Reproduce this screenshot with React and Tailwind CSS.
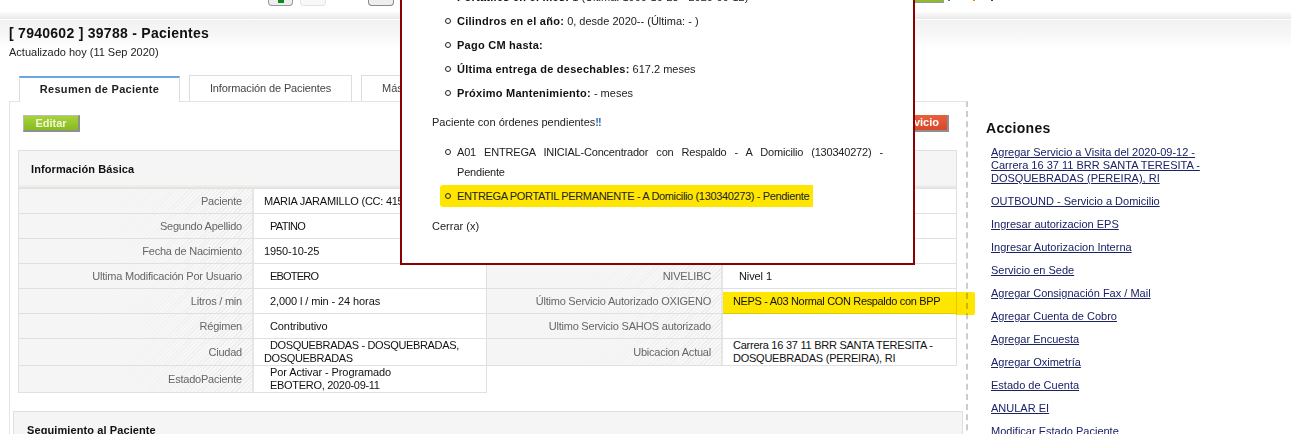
import React from 'react';

const LEFT_ROWS = [
  { label: 'Paciente', value: 'MARIA JARAMILLO (CC: 41575213)', cls: 'pl-[10px] tracking-[-0.25px]' },
  { label: 'Segundo Apellido', value: 'PATINO', cls: 'pl-[16px] tracking-[-0.7px]' },
  { label: 'Fecha de Nacimiento', value: '1950-10-25', cls: 'pl-[10px] tracking-[-0.1px]' },
  { label: 'Ultima Modificación Por Usuario', value: 'EBOTERO', cls: 'pl-[16px] tracking-[-0.8px]' },
  { label: 'Litros / min', value: '2,000 l / min - 24 horas', cls: 'pl-[16px] tracking-[-0.1px]' },
  { label: 'Régimen', value: 'Contributivo', cls: 'pl-[16px] tracking-[-0.1px]' },
];

const ACTIONS = [
  'OUTBOUND - Servicio a Domicilio',
  'Ingresar autorizacion EPS',
  'Ingresar Autorizacion Interna',
  'Servicio en Sede',
  'Agregar Consignación Fax / Mail',
  'Agregar Cuenta de Cobro',
  'Agregar Encuesta',
  'Agregar Oximetría',
  'Estado de Cuenta',
  'ANULAR EI',
  'Modificar Estado Paciente',
];

const hatch = 'bg-[linear-gradient(to_right,#f5f5f5_35%,transparent_100%),repeating-linear-gradient(135deg,#ececec_0,#ececec_1px,#f8f8f8_1px,#f8f8f8_3px)]';

function Row({ label, h = 'h-[25px]', wide, children }) {
  return (
    <div className={`flex ${h} border-b border-[#e0e0e0]`}>
      <div className={`${wide ? 'w-[236px]' : 'w-[235px]'} shrink-0 flex items-center justify-end pr-[10px] text-[#666] tracking-[-0.22px] border-r-2 border-[#e6e6e6] ${hatch}`}>
        {label}
      </div>
      <div className="relative flex-1 min-w-0 flex items-center bg-white text-[#111]">{children}</div>
    </div>
  );
}

function Dot() {
  return <span className="block relative mr-[6px] w-[6px] h-[6px] shrink-0 rounded-full border border-[#222]" />;
}

function Modal() {
  return (
    <div className="absolute z-20 left-[400px] top-0 w-[515px] h-[265px] overflow-hidden bg-white border-2 border-t-0 border-[#8b0000] text-[#222]">
      <ul className="pl-[43px] pr-[30px] mt-[-15px] flex flex-col">
        {[
          ['Portatiles en el mes:', ' 1 (Última: 1900-10-23 - 2020-09-12)'],
          ['Cilindros en el año:', ' 0, desde 2020-- (Última: - )'],
          ['Pago CM hasta:', ''],
          ['Última entrega de desechables:', ' 617.2 meses'],
          ['Próximo Mantenimiento:', ' - meses'],
        ].map(([k, v]) => (
          <li key={k} className="flex items-center h-[24px]">
            <Dot />
            <span><b className="font-bold text-[#111] tracking-[0.25px]">{k}</b>{v}</span>
          </li>
        ))}
      </ul>
      <p className="pl-[30px] mt-[7px] leading-[20px] h-[20px]">Paciente con órdenes pendientes<b className="text-[#3b6fb5] tracking-[-1px]">!!</b></p>
      <ul className="pl-[43px] pr-[30px] mt-[10px]">
        <li className="flex items-start">
          <span className="flex shrink-0 mt-[7px]"><Dot /></span>
          <p className="flex-1 leading-[20px] [text-align:justify] tracking-[-0.2px]">A01 ENTREGA INICIAL-Concentrador con Respaldo - A Domicilio (130340272) - Pendiente</p>
        </li>
        <li className="relative mt-[4px] flex items-start">
          <span className="absolute left-[-5px] top-[-1px] w-[373px] h-[22px] bg-[#ffe600] rounded-l-[3px]" />
          <span className="flex shrink-0 relative mt-[7px]"><Dot /></span>
          <p className="relative leading-[20px] tracking-[-0.35px] whitespace-nowrap">ENTREGA PORTATIL PERMANENTE - A Domicilio (130340273) - Pendiente</p>
        </li>
      </ul>
      <p className="pl-[30px] mt-[10px] leading-[20px]">Cerrar (x)</p>
    </div>
  );
}

export default function App() {
  return (
    <div className="relative w-[1291px] h-[434px] overflow-hidden bg-white font-['Liberation_Sans',Arial,sans-serif] text-[11px] leading-[13px]">
      {/* barra superior, casi todo cortado por el recorte */}
      <div className="relative h-[12px] overflow-hidden">
        <div className="flex items-start pl-[268px]">
          <div className="w-[25px] h-[6px] rounded-b-[4px] border border-t-0 border-[#999] bg-[#eee] flex justify-center">
            <span className="w-[6px] h-[3px] bg-[#0a8a1e]" />
          </div>
          <div className="ml-[7px] w-[26px] h-[6px] rounded-b-[4px] border border-t-0 border-[#e4e4e4] bg-[#f8f8f8]" />
          <div className="ml-[42px] w-[26px] h-[6px] rounded-b-[4px] border border-t-0 border-[#888] bg-[#eee]" />
          <div className="ml-[521px] w-[29px] h-[3px] bg-[#8dbb2c] border-b border-r border-[#999]" />
          <span className="ml-[4px] w-[2px] h-[1px] bg-[#2a7fd0]" />
          <span className="ml-[23px] w-[2px] h-[1px] bg-[#e08a20]" />
          <span className="ml-[16px] w-[2px] h-[1px] bg-[#5030a0]" />
        </div>
      </div>
      <div className="h-[7px] bg-[linear-gradient(to_bottom,#fbfbfb,#e9e9e9)]" />
      <div className="h-px bg-white" />

      {/* encabezado */}
      <div className="h-[55px] pl-[9px] pt-[5px] bg-[linear-gradient(to_bottom,#f1f1f1,#ffffff_55%)]">
        <h1 className="text-[14px] leading-[16px] font-bold text-[#111] tracking-[0.27px]">[ 7940602 ] 39788 - Pacientes</h1>
        <p className="mt-[5px] text-[#222]">Actualizado hoy (11 Sep 2020)</p>
      </div>

      <div className="flex items-start">
        <div className="ml-[9px] w-[959px] shrink-0">
          {/* pestañas */}
          <div className="flex items-end h-[26px] pl-[10px] relative z-10">
            <div className="w-[161px] h-[26px] pb-[2px] bg-white border-x border-[#ddd] border-t-2 border-t-[#6ca6e0] mb-[-1px] flex items-center justify-center font-bold text-[#222] tracking-[0.3px]">Resumen de Paciente</div>
            <div className="ml-[9px] w-[163px] h-[26px] pb-[1px] border border-b-0 border-[#ddd] flex items-center justify-center text-[#444] tracking-[-0.12px]">Información de Pacientes</div>
            <div className="ml-[9px] w-[163px] h-[26px] border border-b-0 border-[#ddd] pl-[20px] flex items-center text-[#444]">Más Información</div>
          </div>

          <div className="h-[400px] border-t border-l border-[#e4e4e4] border-r-2 border-r-[#ccc] [border-right-style:dashed] pt-[13px] pl-[9px]">
            <div className="flex justify-between h-[18px] pl-[4px] pr-[17px]">
              <button className="w-[57px] h-[17px] bg-[linear-gradient(to_bottom,#a8d23c,#86bb1f)] border-b-2 border-r-2 border-[#8f8f8f] border-l border-l-[#bbb] border-t border-t-[#bbb] text-[#f0f8d8] font-bold">Editar</button>
              <button className="w-[110px] h-[17px] bg-[linear-gradient(to_bottom,#e8603c,#d9482a)] border-b-2 border-r-2 border-[#8f8f8f] text-white font-bold text-right pr-[8px]">Nuevo Servicio</button>
            </div>

            {/* información básica */}
            <div className="mt-[17px] ml-[-1px] w-[939px]">
              <div className="h-[39px] pb-[2px] border border-[#e0e0e0] border-b-0 bg-[linear-gradient(to_bottom,#f5f5f5_88%,#dfdfda)] flex items-center pl-[12px] font-bold text-[#111] tracking-[0.1px]">Información Básica</div>
              <div className="flex items-start">
                <div className="w-[469px] border-l border-r border-[#e0e0e0]">
                  {LEFT_ROWS.map(r => (
                    <Row key={r.label} label={r.label}>
                      <span className={`${r.cls} whitespace-nowrap`}>{r.value}</span>
                    </Row>
                  ))}
                  <Row label="Ciudad" h="h-[27px]">
                    <span className="pl-[10px] tracking-[-0.35px] whitespace-nowrap"><span className="pl-[6px]">DOSQUEBRADAS - DOSQUEBRADAS,</span><br />DOSQUEBRADAS</span>
                  </Row>
                  <Row label="EstadoPaciente" h="h-[27px]">
                    <span className="pl-[16px] tracking-[-0.1px] whitespace-nowrap">Por Activar - Programado<br /><span className="tracking-[-0.3px]">EBOTERO, 2020-09-11</span></span>
                  </Row>
                </div>
                <div className="flex-1 min-w-0 border-r border-[#e0e0e0]">
                  <Row wide label="" />
                  <Row wide label="" />
                  <Row wide label="" />
                  <Row wide label="NIVELIBC"><span className="pl-[16px] tracking-[-0.1px]">Nivel 1</span></Row>
                  <Row wide label="Último Servicio Autorizado OXIGENO">
                    <span className="absolute left-0 top-[3px] w-[252px] h-[23px] bg-[#ffe600] mix-blend-multiply rounded-r-[2px]" />
                    <span className="relative pl-[10px] tracking-[-0.34px] whitespace-nowrap">NEPS - A03 Normal CON Respaldo con BPP</span>
                  </Row>
                  <Row wide label="Ultimo Servicio SAHOS autorizado" />
                  <Row wide label="Ubicacion Actual" h="h-[27px]">
                    <span className="pl-[10px] tracking-[-0.25px] whitespace-nowrap">Carrera 16 37 11 BRR SANTA TERESITA -<br />DOSQUEBRADAS (PEREIRA), RI</span>
                  </Row>
                </div>
              </div>
            </div>

            {/* seguimiento */}
            <div className="mt-[18px] ml-[-6px] w-[950px] h-[60px] border border-[#e0e0e0] bg-[#f5f5f5] pl-[13px] pt-[12px] font-bold text-[#111] tracking-[0.1px]">Seguimiento al Paciente</div>
          </div>
        </div>

        {/* acciones */}
        <aside className="ml-[18px] w-[220px] shrink-0 pt-[45px]">
          <h2 className="text-[14px] leading-[16px] font-bold text-[#111] tracking-[0.3px]">Acciones</h2>
          <ul className="mt-[10px] pl-[5px] flex flex-col gap-[10px] text-[#1b2266] underline">
            <li className="w-[210px]">Agregar Servicio a Visita del 2020-09-12 - Carrera 16 37 11 BRR SANTA TERESITA - DOSQUEBRADAS (PEREIRA), RI</li>
            {ACTIONS.map(a => <li key={a}>{a}</li>)}
          </ul>
        </aside>
      </div>

      <Modal />
    </div>
  );
}
